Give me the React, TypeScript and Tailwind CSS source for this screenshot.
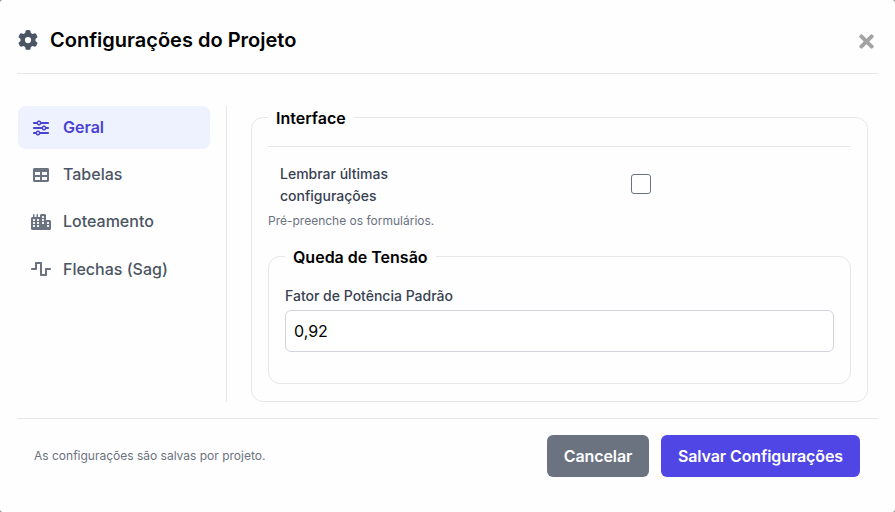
import React from 'react';
import { FaTable, FaTimes } from 'react-icons/fa';
import { FaCity, FaGear, FaSliders, FaWaveSquare } from 'react-icons/fa6';

const tabs = [
  { label: 'Geral', icon: FaSliders, size: 16, active: true },
  { label: 'Tabelas', icon: FaTable, size: 16, active: false },
  { label: 'Loteamento', icon: FaCity, size: 20, active: false },
  { label: 'Flechas (Sag)', icon: FaWaveSquare, size: 20, active: false },
];

export default function App() {
  return (
    <div className="w-[895px] h-[512px] bg-[#8b8f96] overflow-hidden font-['Inter',sans-serif]">
      <div className="w-full h-full bg-[#fefefe] rounded-[3px] flex flex-col px-[17px]">
        <header className="h-[74px] shrink-0 flex items-center border-b border-[#e5e7eb] pt-[6px] pr-px">
          <FaGear size={20} className="text-[#4b5563] ml-px" />
          <h2 className="ml-[12px] text-[20px] leading-[28px] font-semibold text-black">Configurações do Projeto</h2>
          <button className="ml-auto mt-[3px] text-[#a3a3a3]">
            <FaTimes size={21} />
          </button>
        </header>

        <div className="flex h-[344px] shrink-0 pt-[32px] pb-[16px]">
          <nav className="w-[192px] ml-px shrink-0 flex flex-col">
            {tabs.map(({ label, icon: Icon, size, active }) => (
              <a
                key={label}
                className={`h-[43px] mb-[4.33px] flex items-center rounded-[8px] pl-[13px] text-[16px] ${
                  active ? 'bg-[#eef2ff] text-[#4a42d0] font-semibold' : 'text-[#4b5563] font-medium'
                }`}
              >
                <span className={`w-[20px] flex justify-center ${active ? '' : 'text-[#6b7280]'}`}>
                  <Icon size={size} />
                </span>
                <span className="ml-[12px] mt-[-1.6px]">{label}</span>
              </a>
            ))}
          </nav>

          <div className="ml-[16px] border-l border-[#e5e7eb] pl-[24px] flex-1 min-w-0">
            <fieldset className="border border-[#e5e7eb] rounded-[12px] px-[16px] h-[296px] mr-[10px]">
              <legend className="px-[8px] h-[22px] text-[16px] leading-[24px] font-semibold text-black">Interface</legend>
              <div className="border-t border-[#e5e7eb] mt-[18px] pt-[16px]">
                <div className="flex items-center pl-[12px]">
                  <label className="w-[175px] text-[14px] leading-[22px] font-medium text-[#374151]">
                    Lembrar últimas configurações
                  </label>
                  <span className="ml-[176px] mt-[-3px] w-[20px] h-[20px] rounded-[3px] border border-[#6b7280] bg-white" />
                </div>
                <p className="mt-[6px] text-[12px] leading-[16px] text-[#6b7280]">Pré-preenche os formulários.</p>
              </div>
              <fieldset className="mt-[16px] border border-[#e5e7eb] rounded-[12px] px-[16px] h-[139px]">
                <legend className="px-[8px] h-[22px] text-[16px] leading-[24px] font-semibold text-black">Queda de Tensão</legend>
                <label className="block mt-[19px] text-[14px] leading-[20px] font-medium text-[#374151]">
                  Fator de Potência Padrão
                </label>
                <input
                  readOnly
                  value="0,92"
                  className="mt-[4px] w-full h-[42px] px-[8px] border border-[#d1d5db] rounded-[6px] bg-white text-[16px] text-black outline-none"
                />
              </fieldset>
            </fieldset>
          </div>
        </div>

        <footer className="flex items-center h-[76px] border-t border-[#e5e7eb] pl-[17px] pr-[18px] pb-[1px]">
          <p className="text-[12px] text-[#6b7280]">As configurações são salvas por projeto.</p>
          <button className="ml-auto h-[42px] w-[102px] rounded-[6px] bg-[#6b7280] text-white text-[16px] font-semibold tracking-[-0.1px]">
            Cancelar
          </button>
          <button className="ml-[12px] h-[42px] w-[199px] rounded-[6px] bg-[#4f46e5] text-white text-[16px] font-semibold tracking-[-0.1px]">
            Salvar Configurações
          </button>
        </footer>
      </div>
    </div>
  );
}
